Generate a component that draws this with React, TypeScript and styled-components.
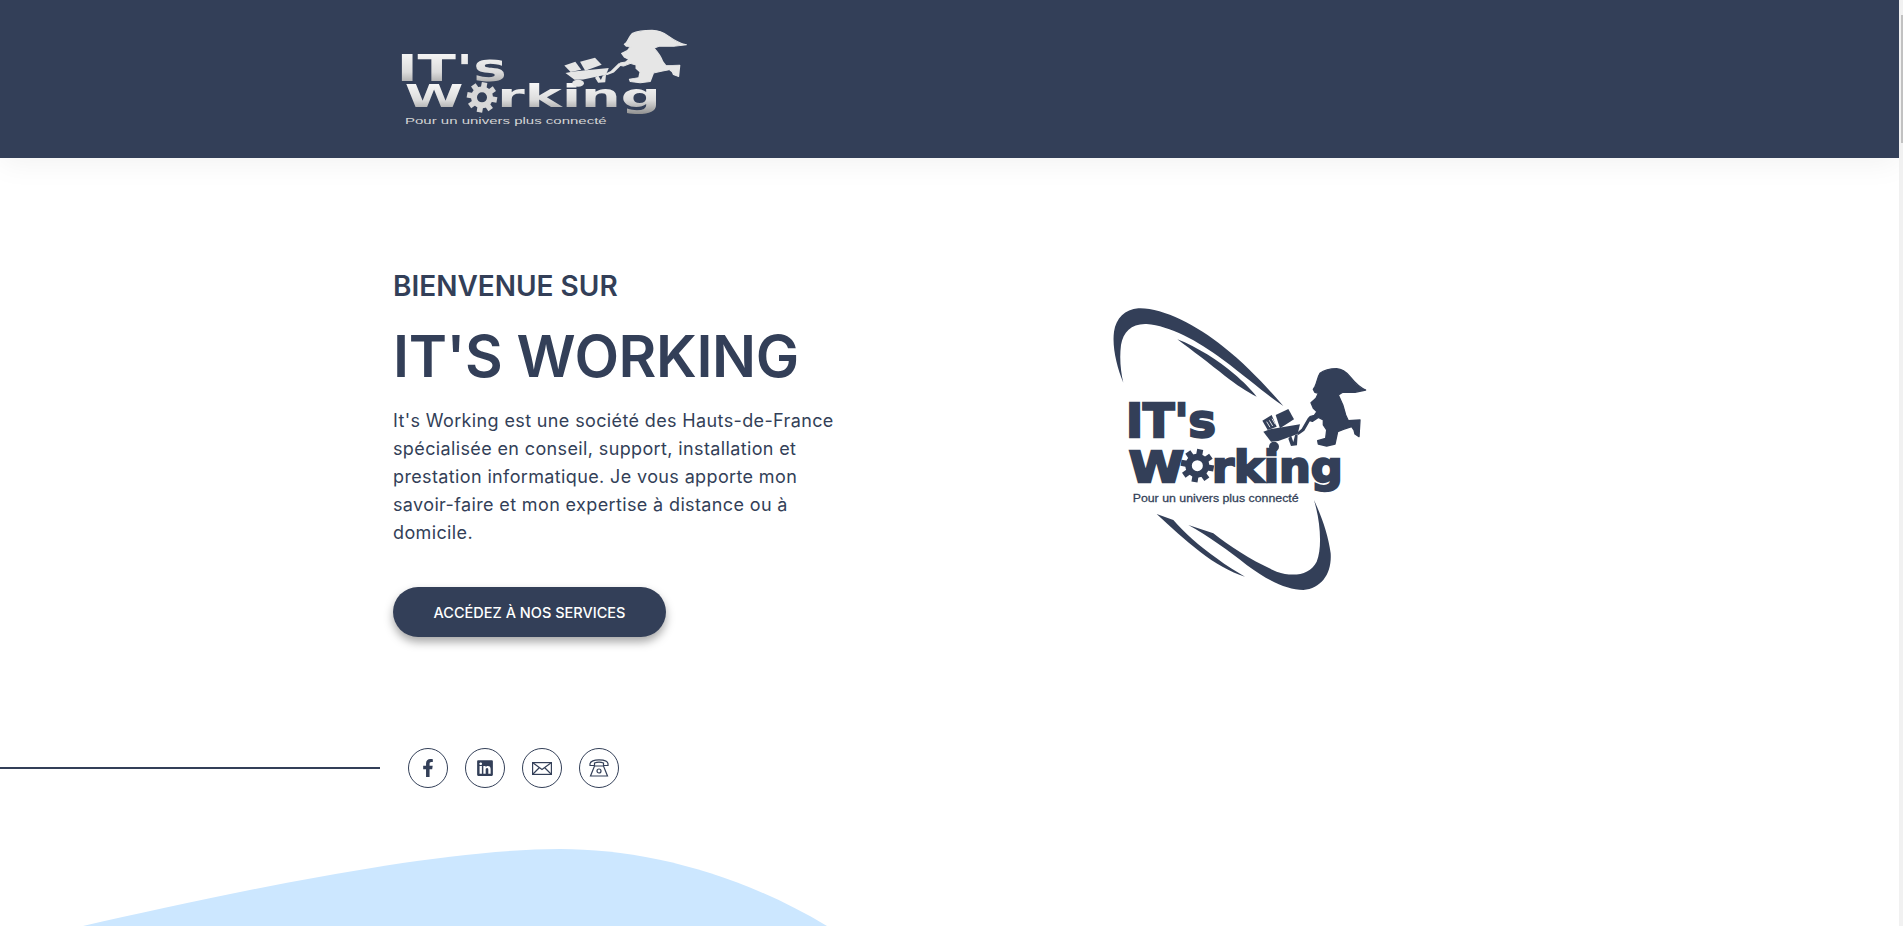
import React, { FC } from "react";
import styled, { createGlobalStyle } from "styled-components";
import { FaFacebookF, FaLinkedin } from "react-icons/fa";

const NAVY = "#333f58";

const GlobalStyle = createGlobalStyle`
  html, body {
    margin: 0;
    height: 100%;
    overflow: hidden;
    background: #fff;
  }
  #root {
    height: 100%;
  }
`;

const Shell = styled.div`
  display: flex;
  height: 100vh;
  overflow: hidden;
  font-family: Inter, "Noto Sans", sans-serif;
  color: ${NAVY};
`;

const Page = styled.main`
  flex: 1;
  min-width: 0;
`;

const ScrollTrack = styled.div`
  flex: 0 0 4px;
  padding: 15px 0 0 2px;
  box-sizing: border-box;
  background: #f1f1f1;
`;

const ScrollThumb = styled.div`
  height: 128px;
  background: #c1c1c1;
`;

const Header = styled.header`
  height: 158px;
  background: ${NAVY};
  padding-left: 380px;
  box-shadow: 0 4px 30px rgba(0, 0, 0, 0.06);
`;

const HeaderLogoSvg = styled.svg`
  display: block;
  box-sizing: content-box;
  width: 320px;
  height: 130px;
  padding-top: 10px;
`;

const Hero = styled.section`
  display: flex;
  padding: 110px 0 0 393px;
`;

const Intro = styled.div`
  width: 697px;
`;

const Welcome = styled.h3`
  margin: 0;
  font-size: 28px;
  font-weight: 600;
  line-height: 36px;
`;

const Title = styled.h1`
  margin: 16px 0 0;
  font-size: 58px;
  font-weight: 600;
  line-height: 72px;
  letter-spacing: -0.4px;
`;

const Lead = styled.p`
  margin: 15px 0 0;
  width: 445px;
  font-size: 18px;
  line-height: 28px;
  font-weight: 400;
  letter-spacing: 0.37px;
`;

const Cta = styled.a`
  display: flex;
  align-items: center;
  justify-content: center;
  width: 273px;
  height: 50px;
  margin-top: 40px;
  border-radius: 25px;
  background: ${NAVY};
  color: #fff;
  font-size: 14.5px;
  font-weight: 500;
  text-transform: uppercase;
  box-shadow: 0 5px 10px rgba(0, 0, 0, 0.35);
  cursor: pointer;
`;

const HeroLogoSvg = styled.svg`
  display: block;
  width: 300px;
  height: 310px;
  margin-top: 22px;
`;

const SocialRow = styled.div`
  display: flex;
  align-items: center;
  gap: 17px;
  margin-top: 111px;
`;

const Rule = styled.div`
  width: 380px;
  height: 2px;
  margin-right: 11px;
  background: ${NAVY};
`;

const SocialLink = styled.a`
  display: flex;
  align-items: center;
  justify-content: center;
  box-sizing: border-box;
  width: 40px;
  height: 40px;
  border: 1px solid ${NAVY};
  border-radius: 50%;
  color: ${NAVY};
  font-size: 18px;
`;

const Wave = styled.svg`
  display: block;
  width: 900px;
  height: 77px;
  margin-top: 61px;
`;

// gnome + wheelbarrow silhouette, same shape in both logos
const Gnome: FC<{ fill: string; transform: string }> = ({ fill, transform }) => (
  <g transform={transform} fill={fill}>
    <path
      stroke={fill}
      strokeWidth="4"
      strokeLinejoin="round"
      d="M332 90 C312 82 298 66 285 50 C272 34 262 27 245 26 C225 26 205 32 195 40 C188 50 186 68 180 80 L175 88 L180 97 L190 100 L183 115 L168 128 L175 145 L186 155 L178 166 L165 170 L160 180 L172 184 L190 172 L205 180 L205 195 L215 210 L212 235 L188 242 L190 252 L215 258 L240 252 L248 215 L265 208 L290 200 L297 210 L300 222 L312 230 L315 180 L280 182 L272 165 C268 145 258 120 250 105 L262 97 L300 97 Z"
    />
    <path d="M62 165 L100 147 L117 178 L75 205 Z" />
    <path d="M22 182 L50 165 L65 200 L38 210 Z" />
    <path d="M25 215 L45 208 L135 193 L128 222 L70 243 L48 245 Z" />
    <path d="M160 172 L168 178 L148 212 L130 225 L126 218 L140 206 Z" />
    <path d="M100 236 L108 226 L115 246 L120 226 L128 222 L126 256 L108 258 Z" />
    <circle cx="57" cy="260" r="15" />
  </g>
);

const Gear: FC<{ cx: number; cy: number; r: number; fill: string }> = ({ cx, cy, r, fill }) => (
  <g transform={`translate(${cx} ${cy})`} fill={fill}>
    <path
      fillRule="evenodd"
      d={`M${-r * 0.78} 0 A${r * 0.78} ${r * 0.78} 0 1 1 ${r * 0.78} 0 A${r * 0.78} ${r * 0.78} 0 1 1 ${-r * 0.78} 0 Z M${-r * 0.36} 0 A${r * 0.36} ${r * 0.36} 0 1 0 ${r * 0.36} 0 A${r * 0.36} ${r * 0.36} 0 1 0 ${-r * 0.36} 0 Z`}
    />
    {[0, 45, 90, 135, 180, 225, 270, 315].map((a) => (
      <rect
        key={a}
        x={-r * 0.2}
        y={-r * 1.08}
        width={r * 0.4}
        height={r * 0.5}
        transform={`rotate(${a + 10})`}
      />
    ))}
  </g>
);

const HeaderLogo: FC = () => (
  <HeaderLogoSvg viewBox="0 0 960 390">
    <defs>
      <linearGradient id="bevel" x1="0" y1="0" x2="0" y2="1">
        <stop offset="0" stopColor="#ffffff" />
        <stop offset="0.6" stopColor="#dcdcdc" />
        <stop offset="1" stopColor="#8f8f8f" />
      </linearGradient>
      <filter id="soft" x="-5%" y="-5%" width="110%" height="110%">
        <feGaussianBlur stdDeviation="1.6" />
      </filter>
    </defs>
    <g filter="url(#soft)" fontFamily="'DejaVu Sans', sans-serif" fontWeight="700" fill="url(#bevel)">
      <text x="50" y="212" fontSize="112" textLength="330" lengthAdjust="spacingAndGlyphs">
        IT's
      </text>
      <text x="74" y="292" fontSize="95" textLength="176" lengthAdjust="spacingAndGlyphs">
        W
      </text>
      <text x="352" y="292" fontSize="95" textLength="490" lengthAdjust="spacingAndGlyphs">
        rking
      </text>
      <Gear cx={306} cy={262} r={42} fill="#d8d8d8" />
      <Gnome fill="#e6e6e6" transform="translate(527 43) scale(1.18 0.68)" />
    </g>
    <text
      x="75"
      y="342"
      fontFamily="'Liberation Sans', sans-serif"
      fontSize="26"
      fill="#d4d4d4"
      textLength="605"
      lengthAdjust="spacingAndGlyphs"
    >
      Pour un univers plus connecté
    </text>
  </HeaderLogoSvg>
);

const HeroLogo: FC = () => (
  <HeroLogoSvg viewBox="0 0 900 930">
    <g fill={NAVY}>
      <path d="M100 278 C80 230 66 170 72 125 C78 85 105 58 145 55 C215 52 320 105 400 170 C470 225 530 290 580 348 C530 315 470 262 400 210 C320 150 240 108 170 102 C125 100 100 125 93 165 C88 205 92 245 100 278 Z" />
      <path d="M262 148 C320 170 390 215 430 250 C460 275 482 298 500 320 C470 305 440 285 405 258 C360 222 305 180 262 148 Z" />
      <path d="M672 630 C695 680 715 735 722 790 C726 850 695 895 640 900 C590 900 530 870 470 825 C420 785 350 735 295 705 L370 730 C420 770 490 815 560 845 C610 862 660 855 680 815 C698 770 690 690 672 630 Z" />
      <path d="M200 672 L250 690 C280 725 330 770 380 805 C410 828 440 845 465 860 C420 845 375 820 330 785 C285 750 240 710 200 672 Z" />
      <text x="108" y="440" fontFamily="'DejaVu Sans', sans-serif" fontWeight="700" fontSize="137" stroke={NAVY} strokeWidth="7" textLength="270" lengthAdjust="spacingAndGlyphs">
        IT's
      </text>
      <text x="116" y="575" fontFamily="'DejaVu Sans', sans-serif" fontWeight="700" fontSize="130" stroke={NAVY} strokeWidth="7" textLength="166" lengthAdjust="spacingAndGlyphs">
        W
      </text>
      <text x="366" y="575" fontFamily="'DejaVu Sans', sans-serif" fontWeight="700" fontSize="130" stroke={NAVY} strokeWidth="7" textLength="392" lengthAdjust="spacingAndGlyphs">
        rking
      </text>
      <text x="128" y="636" fontFamily="'Liberation Sans', sans-serif" fontWeight="400" fontSize="34" stroke={NAVY} strokeWidth="0.8" textLength="498" lengthAdjust="spacingAndGlyphs">
        Pour un univers plus connecté
      </text>
    </g>
    <Gear cx={322} cy={527} r={46} fill={NAVY} />
    <Gnome fill={NAVY} transform="translate(495 210)" />
    <g stroke="#fff" strokeWidth="2.5">
      <path d="M530 395 L540 412 M538 391 L548 408 M546 386 L556 403" />
    </g>
  </HeroLogoSvg>
);

const MailIcon: FC = () => (
  <svg width="20" height="13" viewBox="0 0 20 13" fill="none" stroke={NAVY} strokeWidth="1.2">
    <rect x="0.6" y="0.6" width="18.8" height="11.8" />
    <path d="M0.5 0.5 L10 7.5 L19.5 0.5 M0.5 12.5 L7.5 5.5 M19.5 12.5 L12.5 5.5" />
  </svg>
);

const PhoneIcon: FC = () => (
  <svg width="20" height="18" viewBox="0 0 20 18" fill="none" stroke={NAVY} strokeWidth="1.2">
    <path d="M1 5 C1 -0.5 19 -0.5 19 5 L19 6.5 L14.5 6.5 L14.5 4 C12 3 8 3 5.5 4 L5.5 6.5 L1 6.5 Z" />
    <path d="M5.5 7 L14.5 7 L18.5 17 L1.5 17 Z" />
    <circle cx="10" cy="12" r="2" />
  </svg>
);

const App: FC = () => (
  <Shell>
    <GlobalStyle />
    <Page>
      <Header>
        <HeaderLogo />
      </Header>
      <Hero>
        <Intro>
          <Welcome>BIENVENUE SUR</Welcome>
          <Title>IT'S WORKING</Title>
          <Lead>
            It's Working est une société des Hauts-de-France spécialisée en conseil, support,
            installation et prestation informatique. Je vous apporte mon savoir-faire et mon
            expertise à distance ou à domicile.
          </Lead>
          <Cta>Accédez à nos services</Cta>
        </Intro>
        <HeroLogo />
      </Hero>
      <SocialRow>
        <Rule />
        <SocialLink>
          <FaFacebookF />
        </SocialLink>
        <SocialLink>
          <FaLinkedin />
        </SocialLink>
        <SocialLink>
          <MailIcon />
        </SocialLink>
        <SocialLink>
          <PhoneIcon />
        </SocialLink>
      </SocialRow>
      <Wave viewBox="0 0 900 77">
        <path d="M83 77 C220 46 430 0 560 0 C640 0 735 22 827 77 Z" fill="#cce7ff" />
      </Wave>
    </Page>
    <ScrollTrack>
      <ScrollThumb />
    </ScrollTrack>
  </Shell>
);

export default App;
